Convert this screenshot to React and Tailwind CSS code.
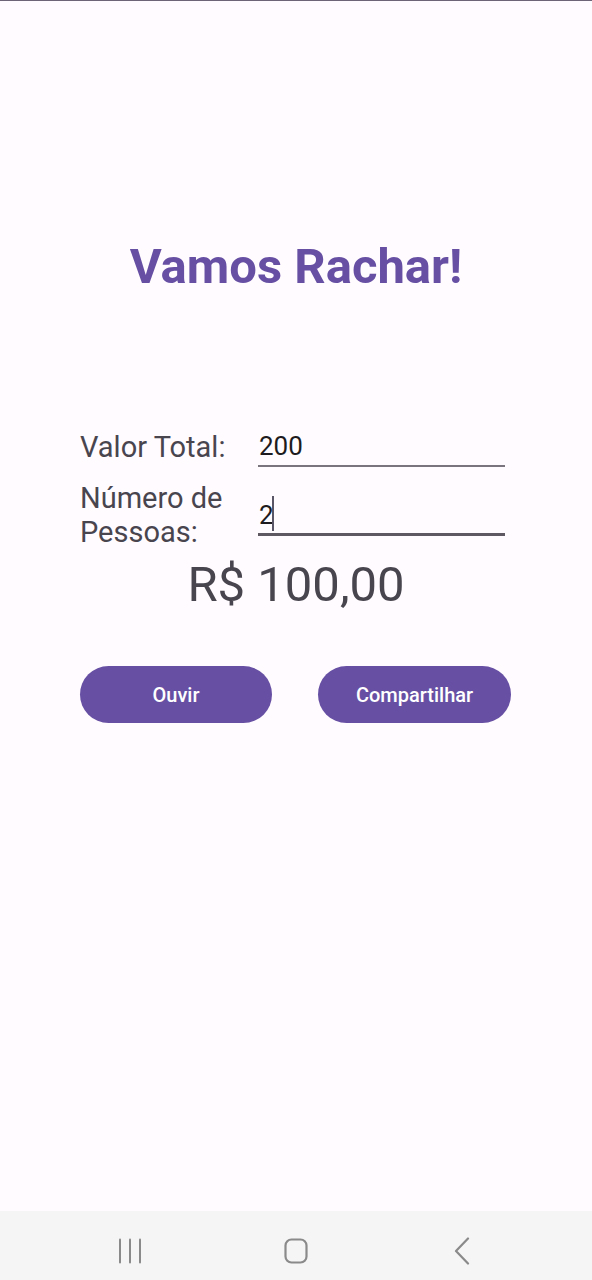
import React from "react";

function NavBar() {
  return (
    <nav className="flex h-[69px] shrink-0 items-center justify-center bg-[#f5f5f5] pt-[10px]">
      <div className="flex w-[166px] justify-center">
        <svg width="24" height="26" viewBox="0 0 24 26" fill="none" stroke="#8a8a8a" strokeWidth="2" strokeLinecap="round">
          <line x1="2" y1="1.5" x2="2" y2="24.5" />
          <line x1="12" y1="1.5" x2="12" y2="24.5" />
          <line x1="22" y1="1.5" x2="22" y2="24.5" />
        </svg>
      </div>
      <div className="flex w-[166px] justify-center">
        <svg width="24" height="26" viewBox="0 0 24 26" fill="none" stroke="#8a8a8a" strokeWidth="2.2">
          <rect x="1.5" y="1.5" width="21" height="23" rx="6" />
        </svg>
      </div>
      <div className="flex w-[166px] justify-center">
        <svg width="16" height="28" viewBox="0 0 16 28" fill="none" stroke="#8a8a8a" strokeWidth="2.2" strokeLinecap="round" strokeLinejoin="round">
          <polyline points="14,1.5 2,14 14,26.5" />
        </svg>
      </div>
    </nav>
  );
}

export default function App() {
  return (
    <div className="flex h-[1280px] w-[592px] flex-col border-t border-[#6e6478] bg-[#fffbfe] font-['Roboto',sans-serif]">
      <main className="flex-1 px-[80px]">
        <h1 className="mt-[236px] text-center text-[49px] font-bold leading-[60px] text-[#6750a4]">
          Vamos Rachar!
        </h1>

        {/* Valor total */}
        <div className="mt-[133px] flex items-start">
          <label className="w-[178px] text-[29px] leading-[34px] text-[#49454f]">
            Valor Total:
          </label>
          <div className="h-[37px] w-[247px] border-b-2 border-[#79747e] pl-[1px] text-[26px] leading-[32px] text-[#1d1b20]">
            200
          </div>
        </div>

        {/* Numero de pessoas */}
        <div className="mt-[14px] flex items-start">
          <label className="w-[178px] text-[29px] leading-[34px] text-[#49454f]">
            Número de
            <br />
            Pessoas:
          </label>
          <div className="relative mt-[18px] h-[37px] w-[247px] border-b-[3px] border-[#5d5862] pl-[1px] text-[26px] leading-[32px] text-[#1d1b20]">
            2
            <span className="absolute left-[14px] top-[-3px] h-[35px] w-[2px] bg-[#5a5566]" />
          </div>
        </div>

        <p className="mt-[8px] text-center text-[49px] leading-[56px] text-[#49454f]">
          R$ 100,00
        </p>

        <div className="mt-[53px] flex gap-[46px]">
          <button className="h-[57px] w-[192px] rounded-full bg-[#6750a4] text-[20px] font-medium text-white">
            Ouvir
          </button>
          <button className="h-[57px] w-[193px] rounded-full bg-[#6750a4] text-[20px] font-medium text-white">
            Compartilhar
          </button>
        </div>
      </main>
      <NavBar />
    </div>
  );
}
